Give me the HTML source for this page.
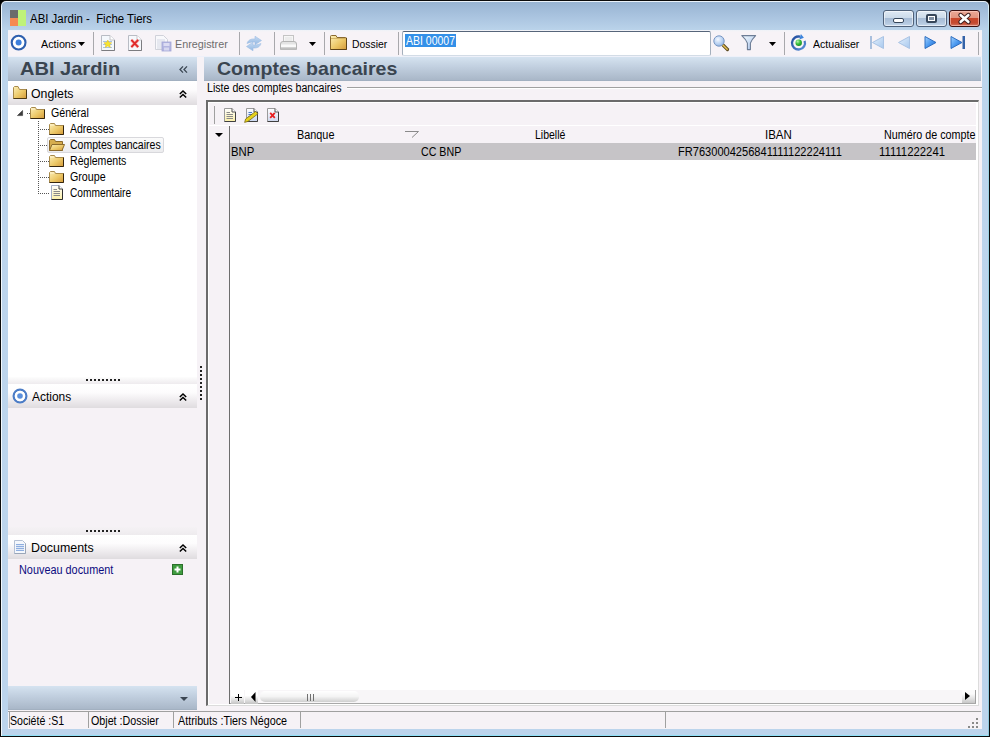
<!DOCTYPE html>
<html><head><meta charset="utf-8">
<style>
*{margin:0;padding:0;box-sizing:border-box}
html,body{width:990px;height:737px;overflow:hidden;background:#000}
body{position:relative;font-family:"Liberation Sans",sans-serif;font-size:11px;color:#000}
.a{position:absolute}
.t{position:absolute;white-space:nowrap;line-height:11px;font-size:11px;transform-origin:0 0}
svg{position:absolute;overflow:visible}
</style></head><body>
<!-- window frame -->
<div class="a" id="frame" style="left:0;top:0;width:990px;height:737px;background:#0b0b0b;border-radius:6px 6px 0 0"></div>
<div class="a" style="left:1px;top:1px;width:988px;height:735px;background:#eaf2fa;border-radius:5px 5px 0 0"></div>
<div class="a" style="left:2px;top:2px;width:986px;height:733px;border-radius:4px 4px 0 0;background:linear-gradient(#98b4d2 0px,#a9c3df 14px,#bad3ea 28px,#bdd5ec 60px,#bcd4ec 100%)"></div>
<div class="a" style="left:2px;top:735px;width:986px;height:1px;background:#8fe1f8"></div>
<div class="a" style="left:988px;top:6px;width:1px;height:730px;background:linear-gradient(#d8eef8,#9fd4e4 40px,#8ec8dc)"></div>
<div class="a" style="left:1px;top:6px;width:1px;height:730px;background:#f2f8fc"></div>

<!-- title -->
<div class="a" style="left:10px;top:10px;width:8px;height:8px;background:#6b6b6b"></div>
<div class="a" style="left:10px;top:18px;width:8px;height:8px;background:#f58a52"></div>
<div class="a" style="left:18px;top:10px;width:8px;height:16px;background:#bff27a"></div>

<!-- caption buttons -->
<div class="a" style="left:883px;top:10px;width:31px;height:17px;border:1px solid #4f6179;border-radius:3px;box-shadow:inset 0 0 0 1px rgba(255,255,255,.55);background:linear-gradient(#dfe9f4,#ccdbea 45%,#a7bcd6 50%,#b4c8df 80%,#c6d8ec)"></div>
<div class="a" style="left:893px;top:18px;width:11px;height:5px;background:#fff;border:1px solid #36465a;border-radius:2px"></div>
<div class="a" style="left:916px;top:10px;width:31px;height:17px;border:1px solid #4f6179;border-radius:3px;box-shadow:inset 0 0 0 1px rgba(255,255,255,.55);background:linear-gradient(#dfe9f4,#ccdbea 45%,#a7bcd6 50%,#b4c8df 80%,#c6d8ec)"></div>
<div class="a" style="left:926px;top:14px;width:11px;height:9px;background:#fff;border:2px solid #36465a;border-radius:2px"></div>
<div class="a" style="left:929px;top:17px;width:5px;height:3px;background:#7f8fa3"></div>
<div class="a" style="left:949px;top:10px;width:31px;height:17px;border:1px solid #3a1010;border-radius:3px;box-shadow:inset 0 0 0 1px rgba(255,210,200,.6);background:linear-gradient(#eba896,#e29580 45%,#c9472b 50%,#c44a30 80%,#d77a66)"></div>
<svg style="left:958px;top:13px" width="13" height="11" viewBox="0 0 13 11"><path d="M2.5 2 L10.5 9 M10.5 2 L2.5 9" stroke="#402020" stroke-width="4.4" stroke-linecap="round"/><path d="M2.7 2.2 L10.3 8.8 M10.3 2.2 L2.7 8.8" stroke="#fff" stroke-width="2.6" stroke-linecap="round"/></svg>

<!-- client area -->
<div class="a" id="client" style="left:8px;top:30px;width:974px;height:699px;background:#f6f2f6"></div>

<!-- toolbar -->
<div class="a" style="left:8px;top:30px;width:974px;height:26px;background:linear-gradient(#eef2f8,#f7f3f7 2px,#f7f3f7)"></div>
<div class="a" style="left:8px;top:56px;width:974px;height:1px;background:#eef1fa"></div>


<!-- toolbar items -->
<svg style="left:10px;top:34px" width="17" height="17" viewBox="0 0 17 17"><circle cx="8.6" cy="8.6" r="6.9" fill="#fff" stroke="#2e5fae" stroke-width="2.1"/><circle cx="8.6" cy="8.6" r="3" fill="#3d7fdc"/></svg>
<svg style="left:78px;top:42px" width="7" height="4" viewBox="0 0 7 4"><path d="M0 0H7L3.5 4Z" fill="#000"/></svg>
<div class="a" style="left:93px;top:32px;width:1px;height:23px;background:#a8a8ac"></div>
<!-- new doc -->
<svg style="left:101px;top:35px" width="14" height="16" viewBox="0 0 14 16"><path d="M.5 .5H9L13.5 5V15.5H.5Z" fill="#f4f8fc" stroke="#b8bcc4"/><path d="M13.5 5V15.5H.5" fill="none" stroke="#7c7c80"/><path d="M9 .5V5H13.5" fill="#fff" stroke="#c4c4c8"/><path d="M2 6.5H11M2 9.5H11M2 12.5H11" stroke="#a9c3df"/><path d="M6.8 5L8 7.6 10.7 7.8 8.7 9.6 9.3 12.4 6.8 10.9 4.3 12.4 4.9 9.6 2.9 7.8 5.6 7.6Z" fill="#f6e630" stroke="#e0b820" stroke-width=".5"/></svg>
<!-- delete doc -->
<svg style="left:128px;top:35px" width="14" height="16" viewBox="0 0 14 16"><path d="M.5 .5H9L13.5 5V15.5H.5Z" fill="#f6f8fc" stroke="#b8bcc4"/><path d="M13.5 5V15.5H.5" fill="none" stroke="#7c7c80"/><path d="M9 .5V5H13.5" fill="#fff" stroke="#c4c4c8"/><path d="M3.3 4.8L10.2 12.2M10.2 4.8L3.3 12.2" stroke="#f6b8b8" stroke-width="3.2"/><path d="M3.3 4.8L10.2 12.2M10.2 4.8L3.3 12.2" stroke="#e02a2a" stroke-width="1.8"/></svg>
<!-- save (disabled) -->
<svg style="left:155px;top:35px" width="17" height="17" viewBox="0 0 17 17"><path d="M.5 .5H8.5L12.5 4.5V14.5H.5Z" fill="#f8f8fb" stroke="#d0d2da"/><path d="M2 5H10M2 7H10M2 9H7M2 11H7M2 13H7" stroke="#d4d8e4"/><rect x="7" y="7" width="9" height="9" fill="#b3b5e0" stroke="#a4a7d6" stroke-width=".8"/><rect x="8.5" y="8" width="6" height="3" fill="#dcdcf2"/><rect x="9" y="12.5" width="5" height="3" fill="#d6d7ef"/></svg>
<div class="a" style="left:239px;top:32px;width:1px;height:23px;background:#a8a8ac"></div>
<!-- refresh disabled -->
<svg style="left:245px;top:35px" width="18" height="17" viewBox="0 0 18 17"><defs><linearGradient id="rfg" x1="0" y1="0" x2="0" y2="1"><stop offset="0" stop-color="#c5daf2"/><stop offset="1" stop-color="#94b8e2"/></linearGradient></defs><path d="M2 8.5C3 5 6 3.6 10 4V1.2L16.5 5.5 10 9.8V7C7 6.8 4.5 7.5 2 8.5Z" fill="url(#rfg)" stroke="#9dbde4" stroke-width=".6"/><path d="M16 8.5C15 12 12 13.4 8 13V15.8L1.5 11.5 8 7.2V10C11 10.2 13.5 9.5 16 8.5Z" fill="url(#rfg)" stroke="#9dbde4" stroke-width=".6"/></svg>
<div class="a" style="left:274px;top:32px;width:1px;height:23px;background:#a8a8ac"></div>
<!-- printer disabled -->
<svg style="left:279px;top:35px" width="19" height="16" viewBox="0 0 19 16"><rect x="4.5" y=".5" width="10" height="7" fill="#f6f6f6" stroke="#c4c4c4"/><path d="M6 3H13M6 5H13" stroke="#e2e2e2"/><path d="M1.5 9Q1.5 6.5 4 6.5H15Q17.5 6.5 17.5 9V14.5H1.5Z" fill="#e4e4e4" stroke="#b4b4b4"/><rect x="2" y="9.5" width="15" height="2.5" fill="#fafafa"/><path d="M2 13.5H17" stroke="#c0c0c0" stroke-width="2"/></svg>
<svg style="left:309px;top:42px" width="7" height="4" viewBox="0 0 7 4"><path d="M0 0H7L3.5 4Z" fill="#000"/></svg>
<div class="a" style="left:324px;top:32px;width:1px;height:23px;background:#a8a8ac"></div>
<!-- folder -->
<svg style="left:330px;top:35px" width="17" height="15" viewBox="0 0 17 15"><defs><linearGradient id="fg" x1="0" y1="0" x2="1" y2="1"><stop offset="0" stop-color="#fcefb8"/><stop offset=".55" stop-color="#ecc867"/><stop offset="1" stop-color="#d49a3a"/></linearGradient></defs><path d="M.5 1.5Q.5 .5 1.5 .5H6L7 2.5H15.5Q16.5 2.5 16.5 3.5V14.5H.5Z" fill="url(#fg)" stroke="#8a6a30"/><path d="M1 3.5H16" stroke="#c9a85a" stroke-width=".8"/><path d="M16.5 3V14.5H.5" fill="none" stroke="#5e4418"/></svg>
<div class="a" style="left:398px;top:32px;width:1px;height:23px;background:#a8a8ac"></div>
<!-- textbox -->
<div class="a" style="left:402px;top:31px;width:309px;height:25px;border:1px solid #a4afbc;border-top-color:#56657a;border-bottom-color:#d3dce6;border-radius:2px;background:#fff"></div>
<div class="a" style="left:405px;top:34px;width:51px;height:13px;background:#3390e8"></div>
<!-- search -->
<svg style="left:713px;top:35px" width="17" height="16" viewBox="0 0 17 16"><defs><radialGradient id="lg" cx=".4" cy=".35" r=".7"><stop offset="0" stop-color="#f4f8ff"/><stop offset=".6" stop-color="#b9d2f2"/><stop offset="1" stop-color="#8fb0dc"/></radialGradient></defs><path d="M9 9L14.5 14.5" stroke="#5c4a20" stroke-width="3.2" stroke-linecap="round"/><path d="M9.4 9.4L14.2 14.2" stroke="#e6c050" stroke-width="1.4" stroke-linecap="round"/><circle cx="6" cy="6" r="5.2" fill="url(#lg)" stroke="#7a98c4" stroke-width="1"/></svg>
<!-- funnel -->
<svg style="left:741px;top:35px" width="16" height="16" viewBox="0 0 16 16"><defs><linearGradient id="fng" x1="0" y1="0" x2="1" y2="1"><stop offset="0" stop-color="#f2fbff"/><stop offset="1" stop-color="#a9c2ea"/></linearGradient></defs><path d="M.8 .6H14.6Q10.6 4.6 9.4 8.2V14.6H6.4V8.2Q5.2 4.6 .8 .6Z" fill="url(#fng)" stroke="#6d7d96" stroke-width="1.1" stroke-linejoin="round"/></svg>
<svg style="left:769px;top:42px" width="7" height="4" viewBox="0 0 7 4"><path d="M0 0H7L3.5 4Z" fill="#000"/></svg>
<div class="a" style="left:784px;top:32px;width:1px;height:23px;background:#a8a8ac"></div>
<!-- refresh green -->
<svg style="left:790px;top:35px" width="18" height="17" viewBox="0 0 18 17"><defs><radialGradient id="gg" cx=".35" cy=".3" r=".75"><stop offset="0" stop-color="#b8f5b0"/><stop offset=".5" stop-color="#3cc040"/><stop offset="1" stop-color="#168a20"/></radialGradient><linearGradient id="rg2" x1="0" y1="0" x2="1" y2="1"><stop offset="0" stop-color="#1f4c9c"/><stop offset="1" stop-color="#5a8fd8"/></linearGradient></defs><path d="M14.61 5.78A6.5 6.5 0 1 1 10.18 1.72" fill="none" stroke="url(#rg2)" stroke-width="2.3"/><path d="M13.9 2.7L9.4 4.5 10.9 -1Z" fill="#3d84dc"/><circle cx="8.7" cy="7.8" r="3.2" fill="url(#gg)"/></svg>
<!-- nav -->
<svg style="left:869px;top:36px" width="16" height="14" viewBox="0 0 16 14"><defs><linearGradient id="nl" x1="0" y1="0" x2="1" y2="1"><stop offset="0" stop-color="#e4f0fc"/><stop offset="1" stop-color="#a8c8ee"/></linearGradient><linearGradient id="nb" x1="0" y1="0" x2="1" y2="1"><stop offset="0" stop-color="#a6d4ff"/><stop offset=".5" stop-color="#4d9af0"/><stop offset="1" stop-color="#1c64c8"/></linearGradient></defs><rect x="1" y="0" width="2" height="13" fill="#a9bfdd"/><path d="M14.5 .5V12.5L3.5 6.5Z" fill="url(#nl)" stroke="#a9c3e4" stroke-linejoin="round"/></svg>
<svg style="left:898px;top:36px" width="13" height="14" viewBox="0 0 13 14"><path d="M11.5 .5V12.5L.5 6.5Z" fill="url(#nl)" stroke="#a9c3e4" stroke-linejoin="round"/></svg>
<svg style="left:924px;top:36px" width="13" height="14" viewBox="0 0 13 14"><path d="M1 .5V12.5L12 6.5Z" fill="url(#nb)" stroke="#2f6ec0" stroke-linejoin="round"/></svg>
<svg style="left:950px;top:36px" width="16" height="14" viewBox="0 0 16 14"><path d="M1 .5V12.5L12 6.5Z" fill="url(#nb)" stroke="#2f6ec0" stroke-linejoin="round"/><rect x="12.5" y="0" width="2.5" height="13" fill="#3462a8"/></svg>
<div class="a" style="left:978px;top:32px;width:1px;height:23px;background:#a8a8ac"></div>


<!-- LEFT PANEL -->
<div class="a" style="left:8px;top:57px;width:189px;height:24px;background:linear-gradient(#d5e3f0,#c2d0e0 40%,#a9b7c8 96%,#9aa8b8)"></div>
<svg style="left:179px;top:66px" width="9" height="7" viewBox="0 0 9 7"><path d="M4 .4L1 3.5 4 6.6M8 .4L5 3.5 8 6.6" fill="none" stroke="#3b4652" stroke-width="1.3"/></svg>

<!-- Onglets panel -->
<div class="a" style="left:8px;top:81px;width:189px;height:24px;background:linear-gradient(#ffffff,#fdfcfd 35%,#ebe8eb 75%,#dfdcdf)"></div>
<svg style="left:13px;top:86px" width="15" height="14" viewBox="0 0 15 14"><path d="M.5 1.5V12.5H13.5V3.5H6.5L5 .5H1.5Z" fill="url(#fg)" stroke="#a88a4a"/><path d="M13.5 3.5V12.5H.5" fill="none" stroke="#4a3814"/></svg>
<svg style="left:178.6px;top:90px" width="8" height="8" viewBox="0 0 8 8"><path d="M.8 4L4 1 7.2 4M.8 7.5L4 4.5 7.2 7.5" fill="none" stroke="#000" stroke-width="1.5"/></svg>
<div class="a" style="left:8px;top:105px;width:189px;height:272px;background:#fff"></div>

<!-- tree -->
<svg style="left:17px;top:110px" width="6" height="6" viewBox="0 0 6 6"><path d="M5.6 .4V5.6H.4Z" fill="#3c3c3c" stroke="#262626" stroke-width=".5" stroke-linejoin="round"/></svg>
<div class="a" style="left:27px;top:113px;width:4px;height:1px;background-image:linear-gradient(90deg,#555 1px,transparent 1px);background-size:2px 1px"></div>
<div class="a" style="left:38px;top:121px;width:1px;height:73px;background-image:linear-gradient(#555 1px,transparent 1px);background-size:1px 2px"></div>
<div class="a" style="left:39px;top:129px;width:10px;height:1px;background-image:linear-gradient(90deg,transparent 1px,#555 1px);background-size:2px 1px"></div>
<div class="a" style="left:39px;top:145px;width:10px;height:1px;background-image:linear-gradient(90deg,transparent 1px,#555 1px);background-size:2px 1px"></div>
<div class="a" style="left:39px;top:161px;width:10px;height:1px;background-image:linear-gradient(90deg,transparent 1px,#555 1px);background-size:2px 1px"></div>
<div class="a" style="left:39px;top:177px;width:10px;height:1px;background-image:linear-gradient(90deg,transparent 1px,#555 1px);background-size:2px 1px"></div>
<div class="a" style="left:39px;top:193px;width:11px;height:1px;background-image:linear-gradient(90deg,transparent 1px,#555 1px);background-size:2px 1px"></div>

<svg style="left:30px;top:107px" width="15" height="12" viewBox="0 0 15 12"><path d="M.5 1.5V11.5H14.5V2.5H6.5L5.5 .5H1.5Z" fill="url(#fg)" stroke="#a88a4a"/><path d="M1 2H5.2" stroke="#fff4d0"/><path d="M14.5 2.5V11.5H.5" fill="none" stroke="#34250e"/></svg>
<svg style="left:49px;top:123px" width="15" height="12" viewBox="0 0 15 12"><path d="M.5 1.5V11.5H14.5V2.5H6.5L5.5 .5H1.5Z" fill="url(#fg)" stroke="#a88a4a"/><path d="M1 2H5.2" stroke="#fff4d0"/><path d="M14.5 2.5V11.5H.5" fill="none" stroke="#34250e"/></svg>

<div class="a" style="left:47px;top:137px;width:117px;height:16px;border:1px solid #d8d8dc;border-radius:2px;background:linear-gradient(#fbfbfb,#ececee)"></div>
<svg style="left:49px;top:139px" width="16" height="12" viewBox="0 0 16 12"><path d="M.5 1.5V11.5H13.5V2.5H6.5L5.5 .5H1.5Z" fill="#d6ad4e" stroke="#8c6b2c"/><path d="M.5 11.5L3 5.5H15.5L13 11.5Z" fill="url(#fg)" stroke="#8c6b2c"/></svg>
<svg style="left:49px;top:155px" width="15" height="12" viewBox="0 0 15 12"><path d="M.5 1.5V11.5H14.5V2.5H6.5L5.5 .5H1.5Z" fill="url(#fg)" stroke="#a88a4a"/><path d="M1 2H5.2" stroke="#fff4d0"/><path d="M14.5 2.5V11.5H.5" fill="none" stroke="#34250e"/></svg>
<svg style="left:49px;top:171px" width="15" height="12" viewBox="0 0 15 12"><path d="M.5 1.5V11.5H14.5V2.5H6.5L5.5 .5H1.5Z" fill="url(#fg)" stroke="#a88a4a"/><path d="M1 2H5.2" stroke="#fff4d0"/><path d="M14.5 2.5V11.5H.5" fill="none" stroke="#34250e"/></svg>
<svg style="left:51px;top:185px" width="12" height="15" viewBox="0 0 12 15"><path d="M.5 .5H8L11.5 4V14.5H.5Z" fill="url(#dy)" stroke="#a4aec4"/><path d="M11.5 4V14.5H.5" fill="none" stroke="#303030"/><path d="M8 .5V4H11.5" fill="#fff" stroke="#404040"/><path d="M2.5 4.5H6M2.5 6.5H9M2.5 8.5H9M2.5 10.5H9" stroke="#8a8a8a"/></svg>

<!-- splitter 1 -->
<div class="a" style="left:8px;top:377px;width:189px;height:7px;background:linear-gradient(#fdfdfd,#eeebee)"></div>
<div class="a" style="left:86px;top:379px;width:34px;height:2px;background-image:linear-gradient(90deg,#222 2px,transparent 2px);background-size:4px 2px"></div>

<!-- Actions panel -->
<div class="a" style="left:8px;top:384px;width:189px;height:24px;background:linear-gradient(#ffffff,#fdfcfd 35%,#ebe8eb 75%,#dfdcdf)"></div>
<svg style="left:12px;top:388px" width="16" height="16" viewBox="0 0 16 16"><circle cx="8" cy="8" r="6.4" fill="none" stroke="#4b7cc6" stroke-width="2.2"/><circle cx="8" cy="8" r="5.2" fill="#fff"/><circle cx="8" cy="8" r="2.8" fill="#5b8fdb"/></svg>
<svg style="left:178.6px;top:393px" width="8" height="8" viewBox="0 0 8 8"><path d="M.8 4L4 1 7.2 4M.8 7.5L4 4.5 7.2 7.5" fill="none" stroke="#000" stroke-width="1.5"/></svg>

<!-- splitter 2 -->
<div class="a" style="left:8px;top:527px;width:189px;height:8px;background:linear-gradient(#f5f2f5,#eeebee)"></div>
<div class="a" style="left:86px;top:530px;width:34px;height:2px;background-image:linear-gradient(90deg,#222 2px,transparent 2px);background-size:4px 2px"></div>

<!-- Documents panel -->
<div class="a" style="left:8px;top:535px;width:189px;height:24px;background:linear-gradient(#ffffff,#fdfcfd 35%,#ebe8eb 75%,#dfdcdf)"></div>
<svg style="left:14px;top:540px" width="13" height="15" viewBox="0 0 13 15"><path d="M.5 .5H8.5L11.5 3.5V13.5H.5Z" fill="#f4f7fc" stroke="#b4c0d4"/><path d="M11.5 3.5V13.5H.5" fill="none" stroke="#9aa6b8"/><path d="M2 4.5H10M2 6.5H10M2 8.5H10M2 10.5H10" stroke="#8eaee0"/><path d="M2 5.5H10M2 7.5H10M2 9.5H10" stroke="#dfe8f6"/></svg>
<svg style="left:178.6px;top:544px" width="8" height="8" viewBox="0 0 8 8"><path d="M.8 4L4 1 7.2 4M.8 7.5L4 4.5 7.2 7.5" fill="none" stroke="#000" stroke-width="1.5"/></svg>
<svg style="left:172px;top:564px" width="11" height="11" viewBox="0 0 11 11"><rect x=".5" y=".5" width="10" height="10" fill="#3f9c3f" stroke="#2b6f2b"/><path d="M5.5 2.5V8.5M2.5 5.5H8.5" stroke="#fff" stroke-width="2"/></svg>

<!-- bottom gradient -->
<div class="a" style="left:8px;top:686px;width:189px;height:24px;background:linear-gradient(#d5e3f0,#c2d0e0 40%,#a9b7c8 96%,#9aa8b8)"></div>
<svg style="left:180px;top:697px" width="8" height="4" viewBox="0 0 8 4"><path d="M0 0H8L4 4Z" fill="#3b4652"/></svg>

<!-- vertical splitter dots -->
<div class="a" style="left:200px;top:366px;width:2px;height:34px;background-image:linear-gradient(#222 2px,transparent 2px);background-size:2px 4px"></div>

<!-- RIGHT PANEL -->
<div class="a" style="left:204px;top:57px;width:777px;height:24px;background:linear-gradient(#d5e3f0,#c2d0e0 40%,#a9b7c8 96%,#9aa8b8)"></div>
<div class="a" style="left:347px;top:87px;width:635px;height:1px;background:#a0a0a0"></div>
<div class="a" style="left:347px;top:88px;width:635px;height:1px;background:#fff"></div>

<!-- grid -->
<div class="a" style="left:206px;top:100px;width:773px;height:606px;border-left:2px solid #6b6b6b;border-top:2px solid #6b6b6b;border-right:1px solid #dcdcdc;border-bottom:1px solid #dcdcdc;background:#fff"></div>
<div class="a" style="left:209px;top:103px;width:767px;height:22px;background:#f6f2f6"></div>
<div class="a" style="left:214px;top:106px;width:1px;height:18px;background:#a0a0a0"></div>
<svg style="left:224px;top:108px" width="12" height="14" viewBox="0 0 12 14"><defs><linearGradient id="dy" x1="0" y1="0" x2="0" y2="1"><stop offset="0" stop-color="#ffffff"/><stop offset="1" stop-color="#fbf0a8"/></linearGradient></defs><path d="M.5 .5H8L11.5 4V13.5H.5Z" fill="url(#dy)" stroke="#9a9a9a"/><path d="M11.5 4V13.5H.5" fill="none" stroke="#404040"/><path d="M8 .5V4H11.5" fill="#fff" stroke="#505050"/><path d="M2.5 4.5H6M2.5 6.5H9M2.5 8.5H9M2.5 10.5H9" stroke="#8a8a8a"/></svg>
<svg style="left:244px;top:108px" width="15" height="15" viewBox="0 0 15 15"><defs><linearGradient id="db" x1="0" y1="0" x2="0" y2="1"><stop offset="0" stop-color="#ffffff"/><stop offset="1" stop-color="#c8d6f0"/></linearGradient></defs><path d="M2.5 .5H10L13.5 4V13.5H2.5Z" fill="url(#db)" stroke="#9a9a9a"/><path d="M13.5 4V13.5H2.5" fill="none" stroke="#404040"/><path d="M10 .5V4H13.5" fill="#fff" stroke="#505050"/><path d="M4.5 4.5H8M4.5 6.5H10M4.5 8.5H8" stroke="#4a78c0"/><path d="M.6 14.4L1.6 11 11.6 3.4 14 5.8 4 13.4Z" fill="#e6d21c" stroke="#6a5a10" stroke-width=".7" stroke-linejoin="round"/></svg>
<svg style="left:267px;top:108px" width="12" height="14" viewBox="0 0 12 14"><defs><linearGradient id="dl" x1="0" y1="0" x2="0" y2="1"><stop offset="0" stop-color="#ffffff"/><stop offset="1" stop-color="#cfd8ee"/></linearGradient></defs><path d="M.5 .5H8L11.5 4V13.5H.5Z" fill="url(#dl)" stroke="#9a9a9a"/><path d="M11.5 4V13.5H.5" fill="none" stroke="#404040"/><path d="M8 .5V4H11.5" fill="#fff" stroke="#505050"/><path d="M3.2 4.8L7.8 9.8M7.8 4.8L3.2 9.8" stroke="#e82020" stroke-width="1.8"/></svg>

<!-- header row -->
<div class="a" style="left:209px;top:125px;width:767px;height:1px;background:#ffffff"></div>
<div class="a" style="left:209px;top:126px;width:767px;height:17px;background:#f6f2f6"></div>
<div class="a" style="left:209px;top:143px;width:20px;height:561px;background:#f6f2f6"></div>
<div class="a" style="left:229px;top:126px;width:1px;height:578px;background:#6e6e6e"></div>
<svg style="left:215px;top:133px" width="8" height="4" viewBox="0 0 8 4"><path d="M0 0H8L4 4Z" fill="#000"/></svg>
<svg style="left:405px;top:131px" width="14" height="7" viewBox="0 0 14 7"><path d="M0 .5H13.5L7 6.5" fill="none" stroke="#8a8a8a"/></svg>

<!-- selected row -->
<div class="a" style="left:230px;top:143px;width:746px;height:17px;background:#c6c4c7"></div>

<!-- scroll row -->
<div class="a" style="left:230px;top:690px;width:746px;height:13px;background:#f8f6f8"></div>
<div class="a" style="left:230px;top:703px;width:746px;height:1px;background:#a8a8a8"></div>
<div class="a" style="left:231px;top:690px;width:13px;height:14px;background:linear-gradient(#ffffff 40%,#c4c4c4)"></div>
<div class="a" style="left:235px;top:697px;width:7px;height:1px;background:#000"></div>
<div class="a" style="left:238px;top:694px;width:1px;height:7px;background:#000"></div>
<div class="a" style="left:245px;top:690px;width:13px;height:14px;background:linear-gradient(#ffffff 40%,#c4c4c4)"></div>
<svg style="left:251px;top:692px" width="5" height="10" viewBox="0 0 5 10"><path d="M4.5 0V10L0 5Z" fill="#000"/></svg>
<div class="a" style="left:260px;top:691px;width:99px;height:11px;border-radius:5px;background:linear-gradient(#ffffff,#f4f4f4 50%,#cfcfcf)"></div>
<div class="a" style="left:307px;top:694px;width:1px;height:7px;background:#707070"></div>
<div class="a" style="left:310px;top:694px;width:1px;height:7px;background:#707070"></div>
<div class="a" style="left:313px;top:694px;width:1px;height:7px;background:#707070"></div>
<div class="a" style="left:962px;top:690px;width:14px;height:13px;background:linear-gradient(#fbfbfb 30%,#c8c8c8);border-right:1px solid #a0a0a0"></div>
<svg style="left:965px;top:692px" width="5" height="8" viewBox="0 0 5 8"><path d="M0 0V8L5 4Z" fill="#000"/></svg>

<!-- status bar -->
<div class="a" style="left:8px;top:711px;width:973px;height:1px;background:#a0a0a0"></div>
<div class="a" style="left:8px;top:712px;width:973px;height:17px;background:#f6f2f6"></div>
<div class="a" style="left:9px;top:712px;width:1px;height:16px;background:#a0a0a0"></div>
<div class="a" style="left:88px;top:712px;width:1px;height:16px;background:#a0a0a0"></div>
<div class="a" style="left:173px;top:712px;width:1px;height:16px;background:#a0a0a0"></div>
<div class="a" style="left:300px;top:712px;width:1px;height:16px;background:#a0a0a0"></div>
<div class="a" style="left:665px;top:712px;width:1px;height:16px;background:#a0a0a0"></div>
<div class="a" style="left:976px;top:718px;width:2px;height:2px;background:#8a8a8a"></div>
<div class="a" style="left:972px;top:722px;width:2px;height:2px;background:#8a8a8a"></div>
<div class="a" style="left:976px;top:722px;width:2px;height:2px;background:#8a8a8a"></div>
<div class="a" style="left:968px;top:726px;width:2px;height:2px;background:#8a8a8a"></div>
<div class="a" style="left:972px;top:726px;width:2px;height:2px;background:#8a8a8a"></div>
<div class="a" style="left:976px;top:726px;width:2px;height:2px;background:#8a8a8a"></div>

<div class="t" id="title" style="left:30.00px;top:12.84px;font-size:12px;line-height:12px;font-weight:normal;color:#000;transform:scaleX(0.9534)">ABI Jardin -&nbsp; Fiche Tiers</div>
<div class="t" id="tbact" style="left:41.00px;top:39.02px;font-size:11px;line-height:11px;font-weight:normal;color:#000;transform:scaleX(0.9751)">Actions</div>
<div class="t" id="enreg" style="left:175.00px;top:39.02px;font-size:11px;line-height:11px;font-weight:normal;color:#6d6d6d;transform:scaleX(0.9811)">Enregistrer</div>
<div class="t" id="doss" style="left:352.00px;top:39.02px;font-size:11px;line-height:11px;font-weight:normal;color:#000;transform:scaleX(0.9444)">Dossier</div>
<div class="t" id="abi7" style="left:406.00px;top:34.84px;font-size:12px;line-height:12px;font-weight:normal;color:#fff;transform:scaleX(0.8738)">ABI 00007</div>
<div class="t" id="actu" style="left:813.00px;top:39.02px;font-size:11px;line-height:11px;font-weight:normal;color:#000;transform:scaleX(0.9599)">Actualiser</div>
<div class="t" id="abij" style="left:20.00px;top:58.58px;font-size:19px;line-height:19px;font-weight:bold;color:#3a4550;transform:scaleX(1.0541)">ABI Jardin</div>
<div class="t" id="cb" style="left:217.00px;top:58.58px;font-size:19px;line-height:19px;font-weight:bold;color:#3a4550;transform:scaleX(1.0289)">Comptes bancaires</div>
<div class="t" id="ong" style="left:31.00px;top:87.84px;font-size:12px;line-height:12px;font-weight:normal;color:#000;transform:scaleX(1.0271)">Onglets</div>
<div class="t" id="gen" style="left:51.00px;top:106.84px;font-size:12px;line-height:12px;font-weight:normal;color:#000;transform:scaleX(0.8857)">Général</div>
<div class="t" id="adr" style="left:69.80px;top:122.84px;font-size:12px;line-height:12px;font-weight:normal;color:#000;transform:scaleX(0.8741)">Adresses</div>
<div class="t" id="cpt" style="left:70.00px;top:138.84px;font-size:12px;line-height:12px;font-weight:normal;color:#000;transform:scaleX(0.8768)">Comptes bancaires</div>
<div class="t" id="regl" style="left:70.00px;top:154.84px;font-size:12px;line-height:12px;font-weight:normal;color:#000;transform:scaleX(0.8802)">Règlements</div>
<div class="t" id="grp" style="left:70.00px;top:170.84px;font-size:12px;line-height:12px;font-weight:normal;color:#000;transform:scaleX(0.8905)">Groupe</div>
<div class="t" id="comm" style="left:70.00px;top:186.84px;font-size:12px;line-height:12px;font-weight:normal;color:#000;transform:scaleX(0.8494)">Commentaire</div>
<div class="t" id="actp" style="left:31.80px;top:390.84px;font-size:12px;line-height:12px;font-weight:normal;color:#000;transform:scaleX(0.9964)">Actions</div>
<div class="t" id="docs" style="left:31.00px;top:541.84px;font-size:12px;line-height:12px;font-weight:normal;color:#000;transform:scaleX(1.0339)">Documents</div>
<div class="t" id="nouv" style="left:18.60px;top:563.84px;font-size:12px;line-height:12px;font-weight:normal;color:#0c0c80;transform:scaleX(0.9062)">Nouveau document</div>
<div class="t" id="liste" style="left:207.20px;top:81.84px;font-size:12px;line-height:12px;font-weight:normal;color:#000;transform:scaleX(0.8849)">Liste des comptes bancaires</div>
<div class="t" id="banq" style="left:297.40px;top:128.84px;font-size:12px;line-height:12px;font-weight:normal;color:#000;transform:scaleX(0.9053)">Banque</div>
<div class="t" id="lib" style="left:535.10px;top:128.84px;font-size:12px;line-height:12px;font-weight:normal;color:#000;transform:scaleX(0.8741)">Libellé</div>
<div class="t" id="iban" style="left:764.80px;top:128.84px;font-size:12px;line-height:12px;font-weight:normal;color:#000;transform:scaleX(0.9559)">IBAN</div>
<div class="t" id="num" style="left:884.20px;top:128.84px;font-size:12px;line-height:12px;font-weight:normal;color:#000;transform:scaleX(0.8963)">Numéro de compte</div>
<div class="t" id="bnp" style="left:231.00px;top:145.84px;font-size:12px;line-height:12px;font-weight:normal;color:#000;transform:scaleX(0.9435)">BNP</div>
<div class="t" id="ccbnp" style="left:421.00px;top:145.84px;font-size:12px;line-height:12px;font-weight:normal;color:#000;transform:scaleX(0.8885)">CC BNP</div>
<div class="t" id="ibanv" style="left:678.30px;top:145.84px;font-size:12px;line-height:12px;font-weight:normal;color:#000;transform:scaleX(0.9228)">FR7630004256841111122224111</div>
<div class="t" id="numv" style="left:879.20px;top:145.84px;font-size:12px;line-height:12px;font-weight:normal;color:#000;transform:scaleX(0.9449)">11111222241</div>
<div class="t" id="soc" style="left:10.20px;top:714.84px;font-size:12px;line-height:12px;font-weight:normal;color:#000;transform:scaleX(0.8833)">Société :S1</div>
<div class="t" id="obj" style="left:90.80px;top:714.84px;font-size:12px;line-height:12px;font-weight:normal;color:#000;transform:scaleX(0.8913)">Objet :Dossier</div>
<div class="t" id="attr" style="left:177.70px;top:714.84px;font-size:12px;line-height:12px;font-weight:normal;color:#000;transform:scaleX(0.8970)">Attributs :Tiers Négoce</div>
</body></html>
